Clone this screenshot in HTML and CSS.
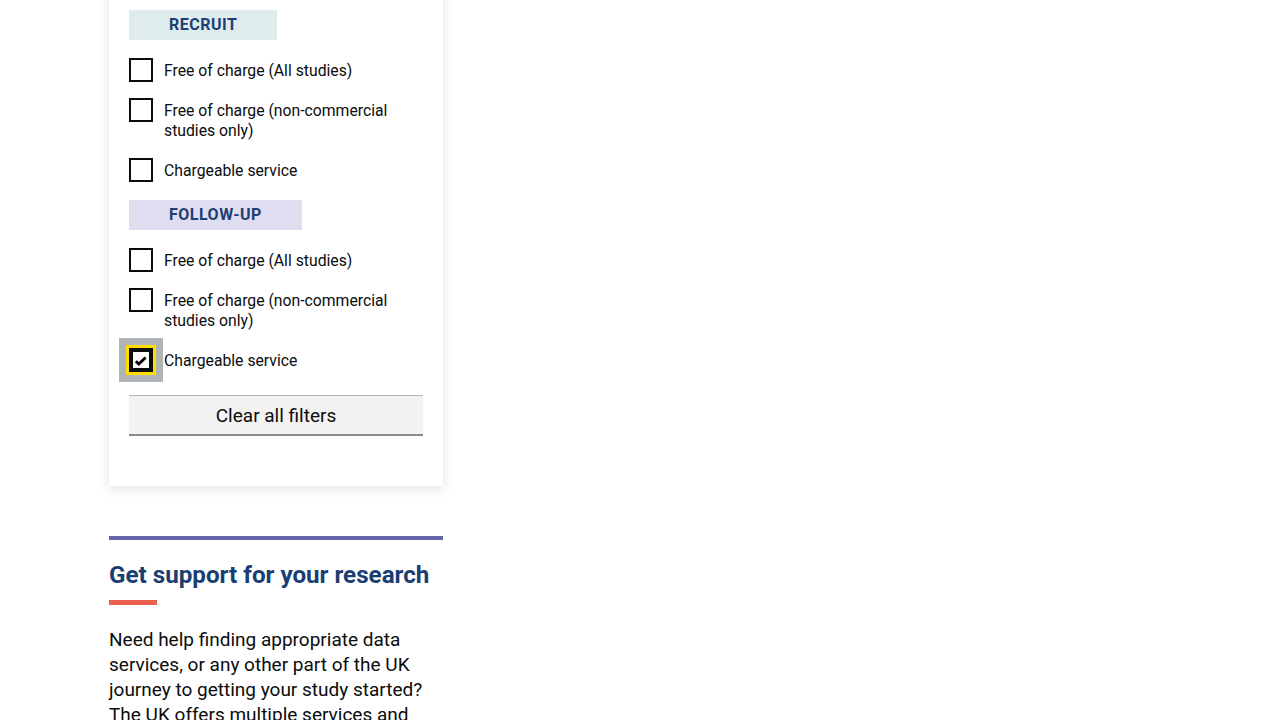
FILE: index.html
```html
<!DOCTYPE html>
<html lang="en">
<head>
<meta charset="utf-8">
<title>Filters</title>
<link rel="stylesheet" href="styles.css">
</head>
<body>
<div class="page">
  <aside class="sidebar">
    <div class="card">
      <div class="group">
        <div class="tag tag-recruit">RECRUIT</div>
        <div class="options">
          <label class="option"><span class="box"></span><span class="text">Free of charge (All studies)</span></label>
          <label class="option"><span class="box"></span><span class="text">Free of charge (non-commercial studies only)</span></label>
          <label class="option"><span class="box"></span><span class="text">Chargeable service</span></label>
        </div>
      </div>
      <div class="group">
        <div class="tag tag-follow">FOLLOW-UP</div>
        <div class="options">
          <label class="option"><span class="box"></span><span class="text">Free of charge (All studies)</span></label>
          <label class="option"><span class="box"></span><span class="text">Free of charge (non-commercial studies only)</span></label>
          <label class="option"><span class="box box-checked box-focus"><svg viewBox="0 0 16 16" width="16" height="16"><path d="M2.8 9.2 L5.8 12 L12.6 5.4" fill="none" stroke="#000" stroke-width="2.8" stroke-linecap="butt" stroke-linejoin="miter"/></svg></span><span class="text">Chargeable service</span></label>
        </div>
      </div>
      <button class="clear-btn" type="button">Clear all filters</button>
    </div>

    <section class="support">
      <h2 class="support-title">Get support for your research</h2>
      <div class="accent"></div>
      <p class="support-text">Need help finding appropriate data services, or any other part of the UK journey to getting your study started? The UK offers multiple services and</p>
    </section>
  </aside>
</div>
</body>
</html>
```

FILE: styles.css
```css
html, body {
  margin: 0;
  padding: 0;
  background: #ffffff;
}

body {
  font-family: Roboto, "Liberation Sans", Arial, sans-serif;
  color: #0b0c0c;
  overflow: hidden;
  height: 720px;
}

.page {
  padding-left: 109px;
}

.sidebar {
  width: 334px;
}

.card {
  margin-top: -40px;
  padding: 50px 20px 50px 20px;
  background: #ffffff;
  box-shadow: 0 2px 12px rgba(0, 0, 0, 0.13);
}

.group {
  margin-bottom: 18px;
}

.tag {
  display: inline-block;
  height: 30px;
  line-height: 30px;
  padding: 0 40px;
  font-size: 16px;
  font-weight: 700;
  letter-spacing: 0.5px;
  color: #1d3f73;
  margin-bottom: 18px;
}

.tag-recruit {
  background: #deecee;
}

.tag-follow {
  background: #dfddf0;
}

.options {
  display: flex;
  flex-direction: column;
  gap: 16px;
}

.option {
  display: flex;
  align-items: flex-start;
  gap: 11px;
  font-size: 15.75px;
  line-height: 20px;
}

.box {
  flex: none;
  width: 24px;
  height: 24px;
  box-sizing: border-box;
  border: 2px solid #0b0c0c;
  background: #ffffff;
  display: flex;
  align-items: center;
  justify-content: center;
}

.box-checked {
  border-width: 4px;
}

.box-checked svg {
  display: block;
}

.box-focus {
  box-shadow: 0 0 0 3px #ffdd00, 0 0 0 10px #b1b4b6;
}

.text {
  padding: 3px 0 1px 0;
}

.clear-btn {
  display: block;
  width: 100%;
  height: 41px;
  margin-top: 23px;
  padding: 0;
  background: #f3f2f1;
  border: none;
  border-top: 1px solid #b1b4b6;
  border-bottom: 2px solid #8a8a8a;
  font-family: Roboto, "Liberation Sans", Arial, sans-serif;
  font-size: 19px;
  color: #0b0c0c;
  cursor: pointer;
}

.support {
  margin-top: 50px;
  border-top: 4px solid #6667ab;
}

.support-title {
  margin: 20px 0 0 0;
  font-size: 24.2px;
  line-height: 30px;
  font-weight: 700;
  color: #193e72;
}

.accent {
  width: 48px;
  height: 5px;
  background: #e8604c;
  margin-top: 10px;
}

.support-text {
  margin: 22px 0 0 0;
  font-size: 19px;
  line-height: 25px;
  color: #0b0c0c;
}
```
